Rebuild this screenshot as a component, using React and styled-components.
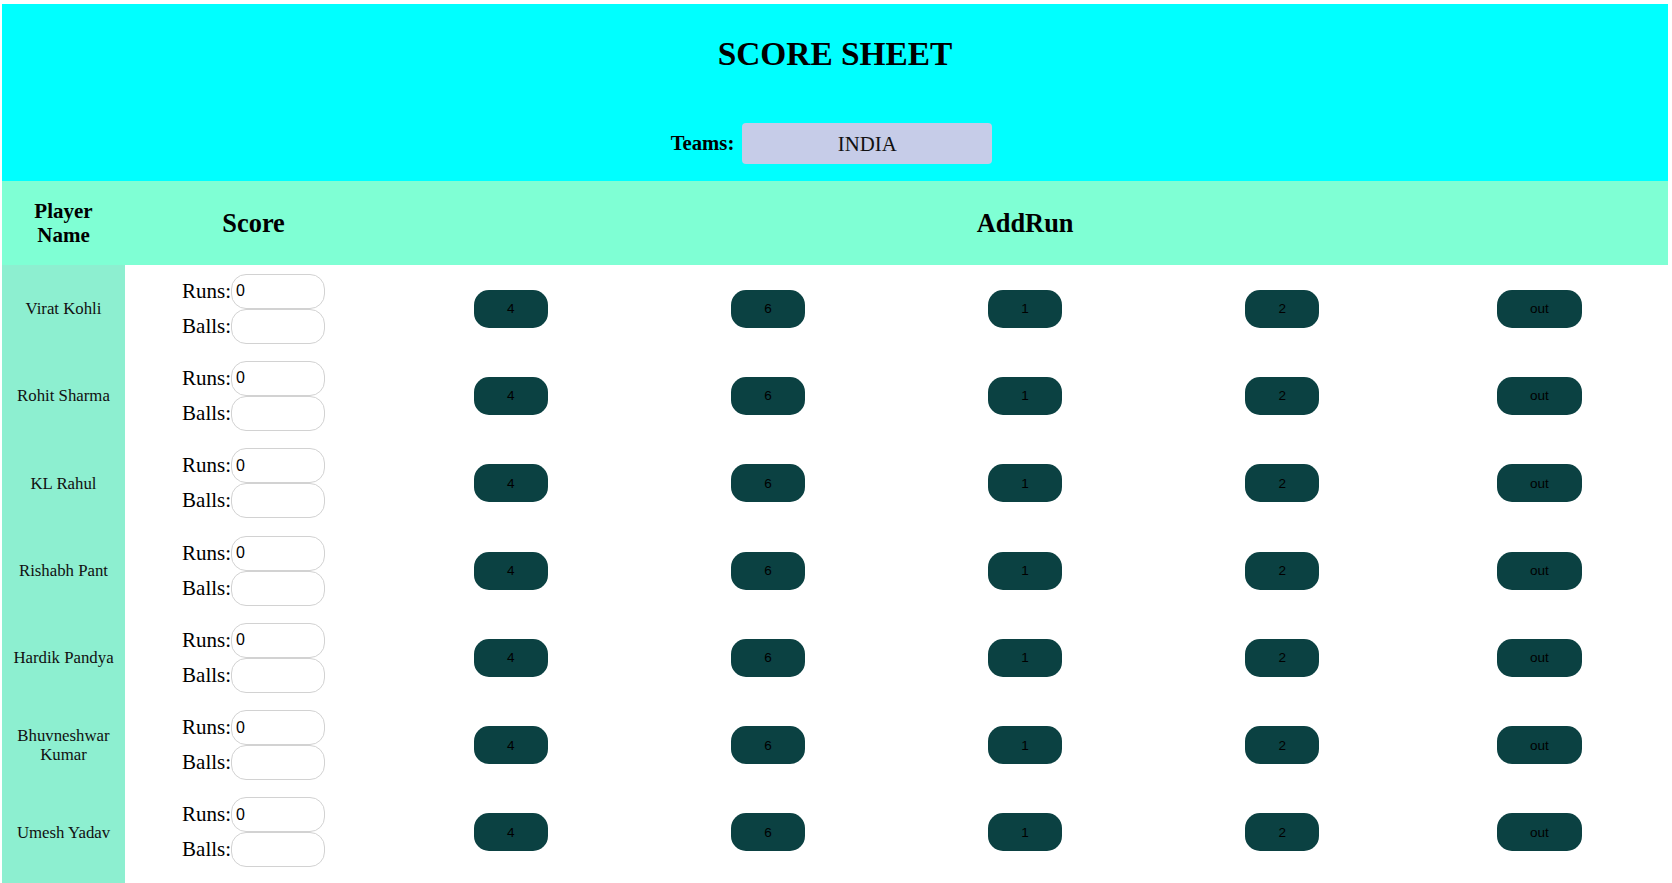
import React from "react";
import styled, { createGlobalStyle } from "styled-components";

const GlobalStyle = createGlobalStyle`
  html, body { margin: 0; padding: 0; background: #ffffff; }
  body { font-family: "Liberation Serif", "Times New Roman", serif; color: #000; }
  * { box-sizing: border-box; }
`;

const Page = styled.div`
  padding: 4px 4px 0 2px;
`;

const Header = styled.header`
  background: #00ffff;
  padding: 31px 0 17px;
  display: flex;
  flex-direction: column;
  align-items: center;
`;

const Title = styled.h1`
  margin: 0;
  font-size: 33.4px;
  line-height: 37px;
  font-weight: bold;
`;

const TeamRow = styled.div`
  margin-top: 51px;
  display: flex;
  align-items: center;
  gap: 8px;
  padding-right: 7px;
`;

const TeamLabel = styled.label`
  font-size: 20.7px;
  font-weight: bold;
`;

const TeamBox = styled.div`
  width: 250px;
  height: 41px;
  border-radius: 4px;
  background: #c6cce8;
  display: flex;
  align-items: center;
  justify-content: center;
  font-size: 20.8px;
  color: #111;
`;

const Grid = styled.div`
  display: grid;
  grid-template-columns: 123px repeat(6, 1fr);
`;

const HeadCell = styled.div`
  background: #7fffd4;
  height: 84px;
  display: flex;
  align-items: center;
  justify-content: center;
  text-align: center;
  font-weight: bold;
  font-size: ${(p) => (p.$small ? "21px" : "26.4px")};
  line-height: ${(p) => (p.$small ? "24px" : "30px")};
  grid-column: ${(p) => p.$span || "auto"};
`;

const NameCell = styled.div`
  background: #8defd0;
  height: ${(p) => (p.$filler ? "12px" : "87.3px")};
  display: flex;
  align-items: center;
  justify-content: center;
  text-align: center;
  padding: 0 6px;
  font-size: 16.8px;
  line-height: 19px;
  color: #111;
`;

const ScoreCell = styled.div`
  height: 87.3px;
  display: flex;
  flex-direction: column;
  align-items: center;
  justify-content: center;
`;

const Field = styled.div`
  display: flex;
  align-items: center;
  font-size: 21px;
`;

const FieldLabel = styled.span`
  width: 49px;
`;

const FieldInput = styled.input`
  width: 94px;
  height: 35px;
  border: 1px solid #d2d2d2;
  border-radius: 15px;
  padding: 0 4px;
  font-family: "Liberation Sans", Arial, sans-serif;
  font-size: 16px;
  color: #000;
  background: #fff;
  outline: none;
`;

const ButtonCell = styled.div`
  height: 87.3px;
  display: flex;
  align-items: center;
  justify-content: center;
`;

const RunButton = styled.button`
  height: 38px;
  padding: 0 33px;
  border: none;
  border-radius: 15px;
  background: #0b4142;
  color: #000;
  font-family: "Liberation Sans", Arial, sans-serif;
  font-size: 13.5px;
  cursor: pointer;
`;

const players = [
  "Virat Kohli",
  "Rohit Sharma",
  "KL Rahul",
  "Rishabh Pant",
  "Hardik Pandya",
  "Bhuvneshwar Kumar",
  "Umesh Yadav",
];

const runs = ["4", "6", "1", "2", "out"];

export default function App() {
  return (
    <>
      <GlobalStyle />
      <Page>
        <Header>
          <Title>SCORE SHEET</Title>
          <TeamRow>
            <TeamLabel>Teams:</TeamLabel>
            <TeamBox>INDIA</TeamBox>
          </TeamRow>
        </Header>
        <Grid>
          <HeadCell $small>
            Player
            <br />
            Name
          </HeadCell>
          <HeadCell>Score</HeadCell>
          <HeadCell $span="span 5">AddRun</HeadCell>
          {players.map((name) => (
            <React.Fragment key={name}>
              <NameCell>{name}</NameCell>
              <ScoreCell>
                <Field>
                  <FieldLabel>Runs:</FieldLabel>
                  <FieldInput defaultValue="0" />
                </Field>
                <Field>
                  <FieldLabel>Balls:</FieldLabel>
                  <FieldInput />
                </Field>
              </ScoreCell>
              {runs.map((r) => (
                <ButtonCell key={r}>
                  <RunButton>{r}</RunButton>
                </ButtonCell>
              ))}
            </React.Fragment>
          ))}
          <NameCell $filler />
        </Grid>
      </Page>
    </>
  );
}
